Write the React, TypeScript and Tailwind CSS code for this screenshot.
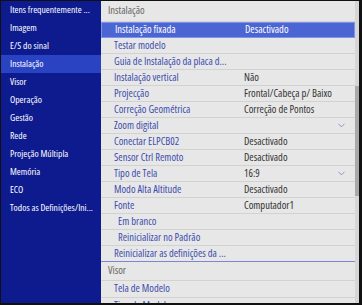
import { ChevronDown } from "lucide-react";

interface Row {
  label: string;
  value?: string;
  indent?: boolean;
  dropdown?: boolean;
  selected?: boolean;
}

const menu = [
  "Itens frequentemente ...",
  "Imagem",
  "E/S do sinal",
  "Instalação",
  "Visor",
  "Operação",
  "Gestão",
  "Rede",
  "Projeção Múltipla",
  "Memória",
  "ECO",
  "Todos as Definições/Ini...",
];

const rows: Row[] = [
  { label: "Instalação fixada", value: "Desactivado", selected: true },
  { label: "Testar modelo" },
  { label: "Guia de Instalação da placa d..." },
  { label: "Instalação vertical", value: "Não" },
  { label: "Projecção", value: "Frontal/Cabeça p/ Baixo" },
  { label: "Correção Geométrica", value: "Correção de Pontos" },
  { label: "Zoom digital", dropdown: true },
  { label: "Conectar ELPCB02", value: "Desactivado" },
  { label: "Sensor Ctrl Remoto", value: "Desactivado" },
  { label: "Tipo de Tela", value: "16:9", dropdown: true },
  { label: "Modo Alta Altitude", value: "Desactivado" },
  { label: "Fonte", value: "Computador1" },
  { label: "Em branco", indent: true },
  { label: "Reinicializar no Padrão", indent: true },
];

const SettingRow = ({ row }: { row: Row }) => (
  <div
    className={
      row.selected
        ? "flex h-[16px] items-center border border-[#7f93e6] bg-[#4b65d3] text-white"
        : "flex h-[16px] items-center border-b border-[#d2d2d2] text-[#3c4cae]"
    }
  >
    <span className={row.indent ? "w-[143px] shrink-0 pl-[17px]" : "w-[143px] shrink-0 pl-[13px]"}>
      {row.label}
    </span>
    <span className={row.selected ? "flex-1 text-white" : "flex-1 text-[#333]"}>{row.value}</span>
    {row.dropdown && <ChevronDown className="mr-[8px] h-[11px] w-[11px] text-[#5566cc]" strokeWidth={1.4} />}
  </div>
);

const App = () => {
  return (
    <div
      className="flex h-[305px] w-[362px] overflow-hidden border-t border-b-2 border-l border-r-[3px] border-[#111] bg-[#e7e7e7] text-[10.5px]"
      style={{ fontFamily: '"Open Sans", "Noto Sans", sans-serif', fontStretch: "condensed" }}
    >
      <div className="w-[100px] shrink-0 bg-[#0e1b8f] text-[9.6px] text-white">
        {menu.map((item) => (
          <div
            key={item}
            className={
              item === "Instalação"
                ? "flex h-[18px] items-center whitespace-nowrap bg-[#2a43c3] pl-[9px]"
                : "flex h-[18px] items-center whitespace-nowrap pl-[9px]"
            }
          >
            {item}
          </div>
        ))}
      </div>
      <div className="flex min-w-0 flex-1">
        <div className="min-w-0 flex-1 whitespace-nowrap">
          <div className="flex h-[21px] items-center border-b border-[#d2d2d2] pl-[7px] text-[#666]">Instalação</div>
          {rows.map((row) => (
            <SettingRow key={row.label} row={row} />
          ))}
          <div className="flex h-[16px] items-center border-b border-[#7b86d8] pl-[13px] text-[#3c4cae]">
            Reinicializar as definições da ...
          </div>
          <div className="flex h-[19px] items-center border-b border-[#d2d2d2] pl-[7px] text-[#666]">Visor</div>
          <div className="flex h-[17px] items-center border-b border-[#d2d2d2] pl-[13px] text-[#3c4cae]">
            Tela de Modelo
          </div>
          <div className="flex h-[16px] items-center border-b border-[#d2d2d2] pl-[13px] text-[#3c4cae]">
            Tipo de Modelo
          </div>
        </div>
        <div className="flex w-[4px] shrink-0 flex-col bg-[#d6d6d6] pt-[85px]">
          <div className="h-[110px] w-full bg-[#a9a9a9]" />
        </div>
      </div>
    </div>
  );
};

export default App;
